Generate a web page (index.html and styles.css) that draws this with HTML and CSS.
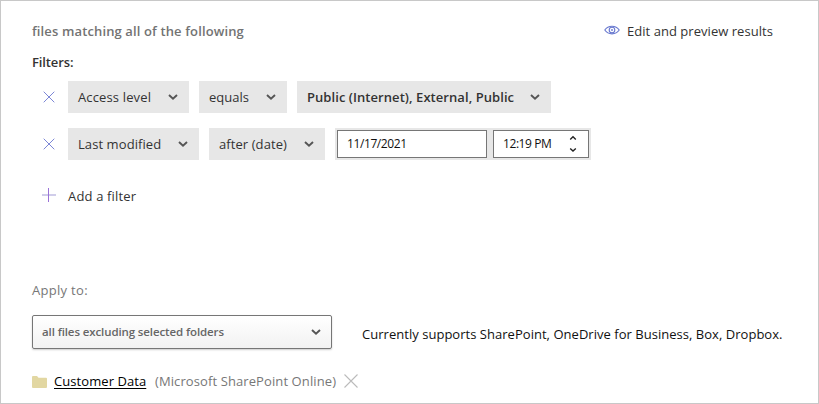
FILE: index.html
```html
<!DOCTYPE html>
<html lang="en">
<head>
<meta charset="utf-8">
<title>Policy filters</title>
<link rel="stylesheet" href="styles.css">
</head>
<body>
<svg width="0" height="0" class="defs">
  <symbol id="x" viewBox="0 0 12 12"><path d="M.7 .7 11.3 11.3M11.3 .7 .7 11.3"/></symbol>
  <symbol id="chev" viewBox="0 0 10 8"><path d="M1 2 5 5.8 9 2"/></symbol>
</svg>
<main class="panel">
  <header class="head">
    <h1 class="title"><span class="t-title">files matching all of the following</span></h1>
    <a class="preview">
      <svg class="eye" viewBox="0 0 16 10"><path d="M.8 5C4.2-.1 11.8-.1 15.2 5 11.8 10.1 4.2 10.1.8 5Z"/><circle cx="8" cy="5" r="2.8"/><circle class="pupil" cx="8" cy="5" r=".9"/></svg>
      <span class="t-preview">Edit and preview results</span>
    </a>
  </header>
  <h2 class="sub"><span class="t-filters">Filters:</span></h2>
  <section class="filters">
    <div class="row">
      <svg class="remove"><use href="#x"/></svg>
      <div class="chip w-access"><span class="t-access">Access level</span><svg class="chev"><use href="#chev"/></svg></div>
      <div class="chip w-equals"><span class="t-equals">equals</span><svg class="chev"><use href="#chev"/></svg></div>
      <div class="chip w-public"><span class="t-public">Public (Internet), External, Public</span><svg class="chev"><use href="#chev"/></svg></div>
    </div>
    <div class="row">
      <svg class="remove"><use href="#x"/></svg>
      <div class="chip w-modified"><span class="t-modified">Last modified</span><svg class="chev"><use href="#chev"/></svg></div>
      <div class="chip w-after"><span class="t-after">after (date)</span><svg class="chev"><use href="#chev"/></svg></div>
      <div class="when">
        <div class="field date"><span class="t-date">11/17/2021</span></div>
        <div class="field time"><span class="t-time">12:19 PM</span><svg class="spin" viewBox="0 0 8 18"><path d="M1.2 4.4 4 1.8 6.8 4.4M1.2 13.4 4 16 6.8 13.4"/></svg></div>
      </div>
    </div>
  </section>
  <div class="add">
    <svg class="plus" viewBox="0 0 14 14"><path class="h" d="M0 7H14"/><path class="v" d="M6.5 0V14"/></svg>
    <span class="t-add">Add a filter</span>
  </div>
  <div class="apply"><span class="t-apply">Apply to:</span></div>
  <div class="scope">
    <div class="select"><span class="t-select">all files excluding selected folders</span><svg class="chev"><use href="#chev"/></svg></div>
    <span class="t-support">Currently supports SharePoint, OneDrive for Business, Box, Dropbox.</span>
  </div>
  <div class="folder">
    <svg class="dir" viewBox="0 0 15 12"><path d="M0 1Q0 0 1 0H5L6.5 1.7H14Q15 1.7 15 2.7V11Q15 12 14 12H1Q0 12 0 11Z"/></svg>
    <a class="t-customer">Customer Data</a>
    <span class="t-source">(Microsoft SharePoint Online)</span>
    <svg class="clear" viewBox="0 0 14 14"><path d="M.5 .5 13.5 13.5M13.5 .5 .5 13.5"/></svg>
  </div>
</main>
</body>
</html>
```
FILE: styles.css
```css
* { box-sizing: border-box; }
body { margin: 0; background: #fff; font: 13px/20px "Open Sans", "Noto Sans", sans-serif; color: #333; }
.defs { position: absolute; }
.panel { width: 819px; height: 404px; border: 1px solid #c8c8c8; padding: 20px 30px 0 31px; overflow: hidden; }
svg { flex: none; fill: none; }
span, a { white-space: nowrap; }
h1, h2 { margin: 0; font-size: 13px; font-weight: 600; }
.head { display: flex; height: 20px; }
.title { width: 572px; color: #737373; }
.preview { display: flex; }
.eye { width: 16px; height: 10px; margin: 4px 7px 0 0; stroke: #6878cf; stroke-width: 1.1; }
.eye .pupil { fill: #6878cf; stroke: none; }
.sub { margin-top: 11px; height: 20px; }
.filters { display: grid; gap: 15px; margin-top: 9px; padding-left: 11px; }
.row { display: flex; align-items: center; height: 32px; gap: 10px; }
.remove { width: 12px; height: 12px; margin-right: 3px; stroke: #7c86d6; stroke-width: 1; }
.chip { display: flex; align-items: center; justify-content: space-between; height: 32px; padding: 0 11px 0 10px; background: #e7e7e7; }
.chev { width: 10px; height: 8px; stroke: #555; stroke-width: 1.9; }
.w-access { width: 121px; }
.w-equals { width: 88px; }
.w-public { width: 254px; font-weight: 600; }
.w-modified { width: 131px; }
.w-after { width: 116px; }
.when { display: flex; gap: 6px; width: 256px; height: 32px; padding: 2px; background: #e7e7e7; }
.field { display: flex; align-items: center; height: 28px; padding: 0 9px; border: 1px solid #767676; background: #fff; color: #111; font-size: 12px; }
.date { width: 150px; }
.time { width: 96px; justify-content: space-between; padding-right: 11px; }
.spin { width: 8px; height: 18px; stroke: #222; stroke-width: 1.4; }
.add { display: flex; align-items: center; margin-top: 26px; padding-left: 10px; height: 20px; }
.plus { width: 14px; height: 14px; margin: -2px 12px 0 0; }
.plus .h { stroke: #d0cdea; stroke-width: 2; }
.plus .v { stroke: #9a72d8; stroke-width: 1; }
.apply { margin-top: 74px; height: 20px; color: #777; }
.scope { display: flex; align-items: center; gap: 30px; margin-top: 15px; height: 34px; color: #111; }
.select { display: flex; align-items: center; justify-content: space-between; width: 300px; height: 34px; padding: 0 10px 0 9px; border: 1px solid #767676; border-radius: 2px; background: linear-gradient(#fff, #f2f2f2); box-shadow: 0 1px 2px #ccc; color: #666; font-size: 11.5px; font-weight: 600; }
.t-support { padding-top: 4px; }
.folder { display: flex; align-items: center; height: 20px; margin-top: 22px; color: #777; }
.dir { width: 15px; height: 12px; margin: 2px 7px 0 0; fill: #e2d7a2; }
.t-customer { color: #000; text-decoration: underline; text-underline-offset: 2px; width: 92px; margin-right: 9px; }
.t-source { width: 181px; margin-right: 8px; }
.clear { width: 14px; height: 14px; stroke: #bbb; stroke-width: 1.1; }

/* Optical tracking per label */
.t-title { letter-spacing: .13px; }
.t-filters { letter-spacing: -.12px; }
.t-preview { letter-spacing: .04px; }
.t-access { letter-spacing: .14px; }
.t-public { letter-spacing: .06px; }
.t-modified, .t-after { letter-spacing: .08px; }
.t-add { letter-spacing: .16px; }
.t-apply { letter-spacing: .3px; }
.t-date { letter-spacing: -.4px; }
.t-time { letter-spacing: -.42px; }
.t-select { letter-spacing: -.11px; }
.t-support { letter-spacing: .03px; }
.t-customer { letter-spacing: .07px; }
.t-source { letter-spacing: .1px; }
```
